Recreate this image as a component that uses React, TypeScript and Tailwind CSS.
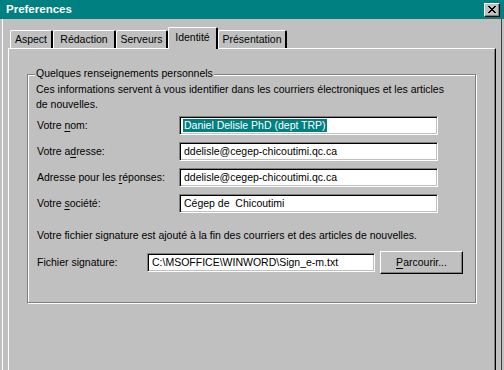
import React from 'react'

const tabs = [
  { label: 'Aspect', w: 'w-[43px]' },
  { label: 'Rédaction', w: 'w-[63px]' },
  { label: 'Serveurs', w: 'w-[52px]' },
  { label: 'Identité', w: 'w-[50px]', active: true },
  { label: 'Présentation', w: 'w-[69px]' },
]

const sunken =
  'border border-t-[#808080] border-l-[#808080] border-b-white border-r-white shadow-[inset_1px_1px_0_#000,inset_-1px_-1px_0_#c0c0c0] bg-white'

function CloseGlyph() {
  // 8x7 pixel cross, like the classic caption button
  const rows = ['XX....XX', '.XX..XX.', '..XXXX..', '...XX...', '..XXXX..', '.XX..XX.', 'XX....XX']
  return (
    <svg width="8" height="7" viewBox="0 0 8 7" shapeRendering="crispEdges">
      {rows.map((r, y) =>
        r.split('').map((c, x) => (c === 'X' ? <rect key={`${x}-${y}`} x={x} y={y} width="1" height="1" fill="#000" /> : null))
      )}
    </svg>
  )
}

function Field({ label, children, value }: { label: React.ReactNode; children?: React.ReactNode; value?: string }) {
  return (
    <div className="flex items-center h-[19px]">
      <div className="w-[143px] pl-[1px]">{label}</div>
      <div className={`w-[259px] h-[19px] flex items-center pl-[4px] whitespace-pre ${sunken}`}>{children ?? value}</div>
    </div>
  )
}

export default function App() {
  return (
    <div className="w-[504px] h-[370px] overflow-hidden bg-[#c0c0c0] flex flex-col font-['Liberation_Sans',Arial,sans-serif] text-[10.5px] text-black select-none">
      {/* Title bar */}
      <div className="h-[19px] bg-[#008080] flex items-center justify-between pl-[6px] pr-[4px] shrink-0">
        <span className="text-white font-bold text-[11.5px] leading-none">Preferences</span>
        <div className="w-[16px] h-[14px] bg-[#c0c0c0] border border-t-white border-l-white border-b-black border-r-black shadow-[inset_-1px_-1px_0_#808080] flex items-center justify-center">
          <CloseGlyph />
        </div>
      </div>

      {/* Window body */}
      <div className="flex-1 mx-[2px] border-l border-white border-r border-r-[#404040] flex flex-col pl-[5px] pr-[5px] pt-[8px]">
        {/* Tabs */}
        <div className="flex items-end h-[21px] pl-[2px]">
          {tabs.map((t) =>
            t.active ? (
              <div
                key={t.label}
                className={`${t.w} h-[22px] -mb-[1px] relative z-10 bg-[#c0c0c0] border-l border-t border-white border-r-2 border-r-black rounded-tl-[2px] rounded-tr-[2px] flex items-start justify-center pt-[3px] leading-[13px]`}
              >
                {t.label}
              </div>
            ) : (
              <div
                key={t.label}
                className={`${t.w} h-[18px] bg-[#c0c0c0] border-l border-t border-white border-r-2 border-r-black rounded-tl-[2px] rounded-tr-[2px] flex items-center justify-center leading-[13px]`}
              >
                {t.label}
              </div>
            )
          )}
        </div>

        {/* Tab panel */}
        <div className="flex-1 border-t border-l border-white border-r border-r-black shadow-[inset_-1px_0_0_#808080] pl-[18px] pt-[25px]">
          <div className="relative w-[449px] h-[229px] border border-[#808080] shadow-[inset_1px_1px_0_#fff,1px_1px_0_#fff] pl-[8px] pt-[7px]">
            <span className="absolute left-[7px] top-[-8px] px-[1px] bg-[#c0c0c0] leading-[13px]">
              Quelques renseignements personnels
            </span>

            <p className="leading-[15px]">
              Ces informations servent à vous identifier dans les courriers électroniques et les articles
              <br />
              de nouvelles.
            </p>

            <div className="mt-[4px] flex flex-col gap-[7px]">
              <Field
                label={
                  <>
                    Votre <u className="underline-offset-2">n</u>om:
                  </>
                }
              >
                <span className="bg-[#008080] text-white leading-[13px] -ml-[1px] pl-[1px] pr-[1px]">
                  Daniel Delisle PhD (dept TRP)
                </span>
              </Field>
              <Field
                label={
                  <>
                    Votre a<u className="underline-offset-2">d</u>resse:
                  </>
                }
                value="ddelisle@cegep-chicoutimi.qc.ca"
              />
              <Field
                label={
                  <>
                    Adresse pour les <u className="underline-offset-2">r</u>éponses:
                  </>
                }
                value="ddelisle@cegep-chicoutimi.qc.ca"
              />
              <Field
                label={
                  <>
                    Votre <u className="underline-offset-2">s</u>ociété:
                  </>
                }
                value="Cégep de  Chicoutimi"
              />
            </div>

            <p className="mt-[15px] leading-[15px] pl-[1px]">
              Votre fichier signature est ajouté à la fin des courriers et des articles de nouvelles.
            </p>

            <div className="mt-[8px] flex items-center h-[23px]">
              <div className="w-[111px] pl-[1px]">Fichier signature:</div>
              <div className={`w-[228px] h-[19px] flex items-center pl-[4px] whitespace-pre ${sunken}`}>
                C:\MSOFFICE\WINWORD\Sign_e-m.txt
              </div>
              <button className="ml-[5px] w-[83px] h-[23px] bg-[#c0c0c0] border border-t-white border-l-white border-b-black border-r-black shadow-[inset_-1px_-1px_0_#808080] flex items-center justify-center">
                <span>
                  <u className="underline-offset-2">P</u>arcourir...
                </span>
              </button>
            </div>
          </div>
        </div>
      </div>
    </div>
  )
}
